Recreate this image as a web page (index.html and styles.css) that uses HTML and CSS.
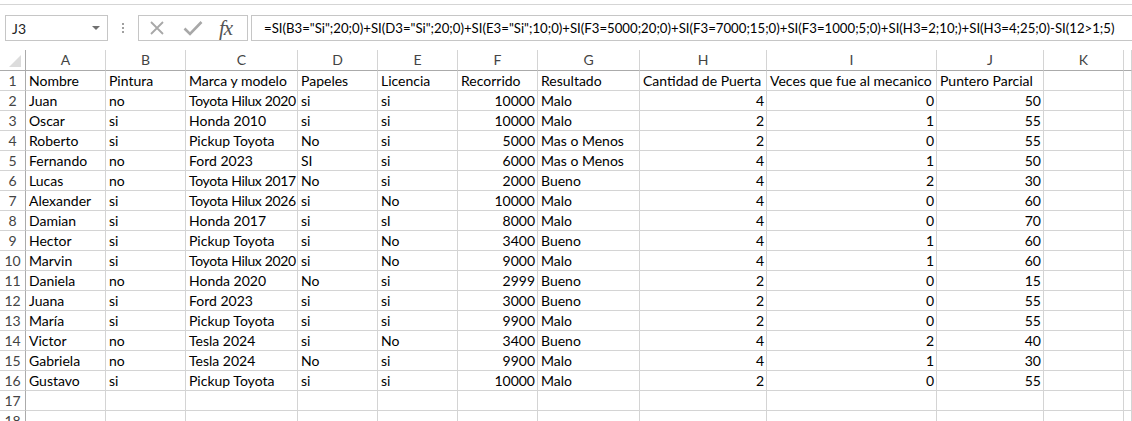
FILE: index.html
```html
<!DOCTYPE html>
<html lang="es">
<head>
<meta charset="utf-8">
<title>Hoja de cálculo</title>
<link rel="stylesheet" href="styles.css">
</head>
<body>
<div class="ribbon-edge"></div>
<div class="formula-bar">
  <div class="name-box"><span>J3</span><span class="arrow"></span></div>
  <div class="dots"><span></span><span></span><span></span></div>
  <div class="fx-box">
    <svg class="ic-x" width="14" height="14" viewBox="0 0 14 14"><path d="M1 1 L13 13 M13 1 L1 13" stroke="#a8a8a8" stroke-width="1.8" fill="none"/></svg>
    <svg class="ic-check" width="20" height="16" viewBox="0 0 20 16"><path d="M1.5 8.5 L7 14 L18.5 2" stroke="#a8a8a8" stroke-width="2.6" fill="none"/></svg>
    <span class="fx">fx</span>
  </div>
  <div class="formula">=SI(B3="Si";20;0)+SI(D3="Si";20;0)+SI(E3="Si";10;0)+SI(F3=5000;20;0)+SI(F3=7000;15;0)+SI(F3=1000;5;0)+SI(H3=2;10;)+SI(H3=4;25;0)-SI(12&gt;1;5)</div>
</div>
<div class="sheet">
  <div class="row head">
    <div class="corner"><svg width="14" height="14" viewBox="0 0 14 14"><path d="M13 1 L13 13 L1 13 Z" fill="#dcdcdc"/></svg></div>
    <div class="ch">A</div><div class="ch">B</div><div class="ch">C</div><div class="ch">D</div><div class="ch">E</div><div class="ch">F</div><div class="ch">G</div><div class="ch">H</div><div class="ch">I</div><div class="ch">J</div><div class="ch">K</div><div class="ch"></div>
  </div>
  <div class="row"><div class="rh">1</div><div class="c">Nombre</div><div class="c">Pintura</div><div class="c">Marca y modelo</div><div class="c">Papeles</div><div class="c">Licencia</div><div class="c">Recorrido</div><div class="c">Resultado</div><div class="c">Cantidad de Puerta</div><div class="c">Veces que fue al mecanico</div><div class="c">Puntero Parcial</div><div class="c"></div><div class="c"></div></div>
  <div class="row"><div class="rh">2</div><div class="c">Juan</div><div class="c">no</div><div class="c fit">Toyota Hilux 2020</div><div class="c">si</div><div class="c">si</div><div class="c n">10000</div><div class="c">Malo</div><div class="c n">4</div><div class="c n">0</div><div class="c n">50</div><div class="c"></div><div class="c"></div></div>
  <div class="row"><div class="rh">3</div><div class="c">Oscar</div><div class="c">si</div><div class="c">Honda 2010</div><div class="c">si</div><div class="c">si</div><div class="c n">10000</div><div class="c">Malo</div><div class="c n">2</div><div class="c n">1</div><div class="c n">55</div><div class="c"></div><div class="c"></div></div>
  <div class="row"><div class="rh">4</div><div class="c">Roberto</div><div class="c">si</div><div class="c">Pickup Toyota</div><div class="c">No</div><div class="c">si</div><div class="c n">5000</div><div class="c">Mas o Menos</div><div class="c n">2</div><div class="c n">0</div><div class="c n">55</div><div class="c"></div><div class="c"></div></div>
  <div class="row"><div class="rh">5</div><div class="c">Fernando</div><div class="c">no</div><div class="c">Ford 2023</div><div class="c">SI</div><div class="c">si</div><div class="c n">6000</div><div class="c">Mas o Menos</div><div class="c n">4</div><div class="c n">1</div><div class="c n">50</div><div class="c"></div><div class="c"></div></div>
  <div class="row"><div class="rh">6</div><div class="c">Lucas</div><div class="c">no</div><div class="c fit">Toyota Hilux 2017</div><div class="c">No</div><div class="c">si</div><div class="c n">2000</div><div class="c">Bueno</div><div class="c n">4</div><div class="c n">2</div><div class="c n">30</div><div class="c"></div><div class="c"></div></div>
  <div class="row"><div class="rh">7</div><div class="c">Alexander</div><div class="c">si</div><div class="c fit">Toyota Hilux 2026</div><div class="c">si</div><div class="c">No</div><div class="c n">10000</div><div class="c">Malo</div><div class="c n">4</div><div class="c n">0</div><div class="c n">60</div><div class="c"></div><div class="c"></div></div>
  <div class="row"><div class="rh">8</div><div class="c">Damian</div><div class="c">si</div><div class="c">Honda 2017</div><div class="c">si</div><div class="c">sI</div><div class="c n">8000</div><div class="c">Malo</div><div class="c n">4</div><div class="c n">0</div><div class="c n">70</div><div class="c"></div><div class="c"></div></div>
  <div class="row"><div class="rh">9</div><div class="c">Hector</div><div class="c">si</div><div class="c">Pickup Toyota</div><div class="c">si</div><div class="c">No</div><div class="c n">3400</div><div class="c">Bueno</div><div class="c n">4</div><div class="c n">1</div><div class="c n">60</div><div class="c"></div><div class="c"></div></div>
  <div class="row"><div class="rh">10</div><div class="c">Marvin</div><div class="c">si</div><div class="c fit">Toyota Hilux 2020</div><div class="c">si</div><div class="c">No</div><div class="c n">9000</div><div class="c">Malo</div><div class="c n">4</div><div class="c n">1</div><div class="c n">60</div><div class="c"></div><div class="c"></div></div>
  <div class="row"><div class="rh">11</div><div class="c">Daniela</div><div class="c">no</div><div class="c">Honda 2020</div><div class="c">No</div><div class="c">si</div><div class="c n">2999</div><div class="c">Bueno</div><div class="c n">2</div><div class="c n">0</div><div class="c n">15</div><div class="c"></div><div class="c"></div></div>
  <div class="row"><div class="rh">12</div><div class="c">Juana</div><div class="c">si</div><div class="c">Ford 2023</div><div class="c">si</div><div class="c">si</div><div class="c n">3000</div><div class="c">Bueno</div><div class="c n">2</div><div class="c n">0</div><div class="c n">55</div><div class="c"></div><div class="c"></div></div>
  <div class="row"><div class="rh">13</div><div class="c">María</div><div class="c">si</div><div class="c">Pickup Toyota</div><div class="c">si</div><div class="c">si</div><div class="c n">9900</div><div class="c">Malo</div><div class="c n">2</div><div class="c n">0</div><div class="c n">55</div><div class="c"></div><div class="c"></div></div>
  <div class="row"><div class="rh">14</div><div class="c">Victor</div><div class="c">no</div><div class="c">Tesla 2024</div><div class="c">si</div><div class="c">No</div><div class="c n">3400</div><div class="c">Bueno</div><div class="c n">4</div><div class="c n">2</div><div class="c n">40</div><div class="c"></div><div class="c"></div></div>
  <div class="row"><div class="rh">15</div><div class="c">Gabriela</div><div class="c">no</div><div class="c">Tesla 2024</div><div class="c">No</div><div class="c">si</div><div class="c n">9900</div><div class="c">Malo</div><div class="c n">4</div><div class="c n">1</div><div class="c n">30</div><div class="c"></div><div class="c"></div></div>
  <div class="row"><div class="rh">16</div><div class="c">Gustavo</div><div class="c">si</div><div class="c">Pickup Toyota</div><div class="c">si</div><div class="c">si</div><div class="c n">10000</div><div class="c">Malo</div><div class="c n">2</div><div class="c n">0</div><div class="c n">55</div><div class="c"></div><div class="c"></div></div>
  <div class="row"><div class="rh">17</div><div class="c"></div><div class="c"></div><div class="c"></div><div class="c"></div><div class="c"></div><div class="c"></div><div class="c"></div><div class="c"></div><div class="c"></div><div class="c"></div><div class="c"></div><div class="c"></div></div>
  <div class="row"><div class="rh">18</div><div class="c"></div><div class="c"></div><div class="c"></div><div class="c"></div><div class="c"></div><div class="c"></div><div class="c"></div><div class="c"></div><div class="c"></div><div class="c"></div><div class="c"></div><div class="c"></div></div>
</div>
</body>
</html>
```
FILE: styles.css
```css
* { box-sizing: border-box; }
html, body { margin: 0; padding: 0; background: #fff; overflow: hidden; }
body {
  width: 1132px;
  height: 421px;
  font-family: "Lato", "Liberation Sans", sans-serif;
  color: #000;
}
.ribbon-edge {
  height: 5px;
  border-bottom: 1px solid #d5d5d5;
}
.formula-bar {
  display: flex;
  height: 26px;
  margin-top: 10px;
  padding-left: 5px;
}
.name-box {
  width: 103px;
  border: 1px solid #c6c6c6;
  display: flex;
  align-items: center;
  justify-content: space-between;
  padding: 0 7px 0 6px;
  font-size: 14px;
  color: #222;
}
.arrow {
  width: 0;
  height: 0;
  border-left: 4px solid transparent;
  border-right: 4px solid transparent;
  border-top: 4px solid #707070;
}
.dots {
  width: 30px;
  display: flex;
  flex-direction: column;
  align-items: center;
  justify-content: center;
  gap: 2px;
}
.dots span {
  width: 2px;
  height: 2px;
  background: #a0a0a0;
}
.fx-box {
  width: 110px;
  border: 1px solid #c6c6c6;
  display: flex;
  align-items: center;
  padding-left: 11px;
}
.ic-check { margin-left: 19px; }
.fx {
  margin-left: 16px;
  font-family: "Liberation Serif", serif;
  font-style: italic;
  font-size: 21px;
  color: #555;
  letter-spacing: -1px;
  line-height: 1;
}
.formula {
  flex: 1;
  margin-left: 3px;
  margin-right: -20px;
  border: 1px solid #c6c6c6;
  padding-left: 12px;
  display: flex;
  align-items: center;
  font-size: 13.2px;
  white-space: nowrap;
  overflow: hidden;
}
.sheet { margin-top: 9px; }
.row {
  display: grid;
  grid-template-columns: 26px 80px 80px 112px 80px 80px 80px 102px 127px 170px 107px 80px 1fr;
  height: 20px;
}
.row.head { height: 21px; }
.c, .ch, .rh, .corner {
  border-right: 1px solid #d4d4d4;
  border-bottom: 1px solid #d4d4d4;
  white-space: nowrap;
  overflow: hidden;
  font-size: 14px;
  line-height: 19px;
}
.c { padding: 0 2px 0 3px; }
.c.fit { letter-spacing: -0.35px; padding-right: 0; }
.c.n { text-align: right; padding-right: 2px; }
.ch {
  text-align: center;
  color: #444;
  border-bottom-color: #ababab;
  line-height: 20px;
}
.rh {
  text-align: center;
  color: #444;
  border-right-color: #ababab;
}
.corner {
  border-right-color: #ababab;
  border-bottom-color: #ababab;
  display: flex;
  align-items: flex-end;
  justify-content: flex-end;
  padding: 0 3px 2px 0;
}
```
